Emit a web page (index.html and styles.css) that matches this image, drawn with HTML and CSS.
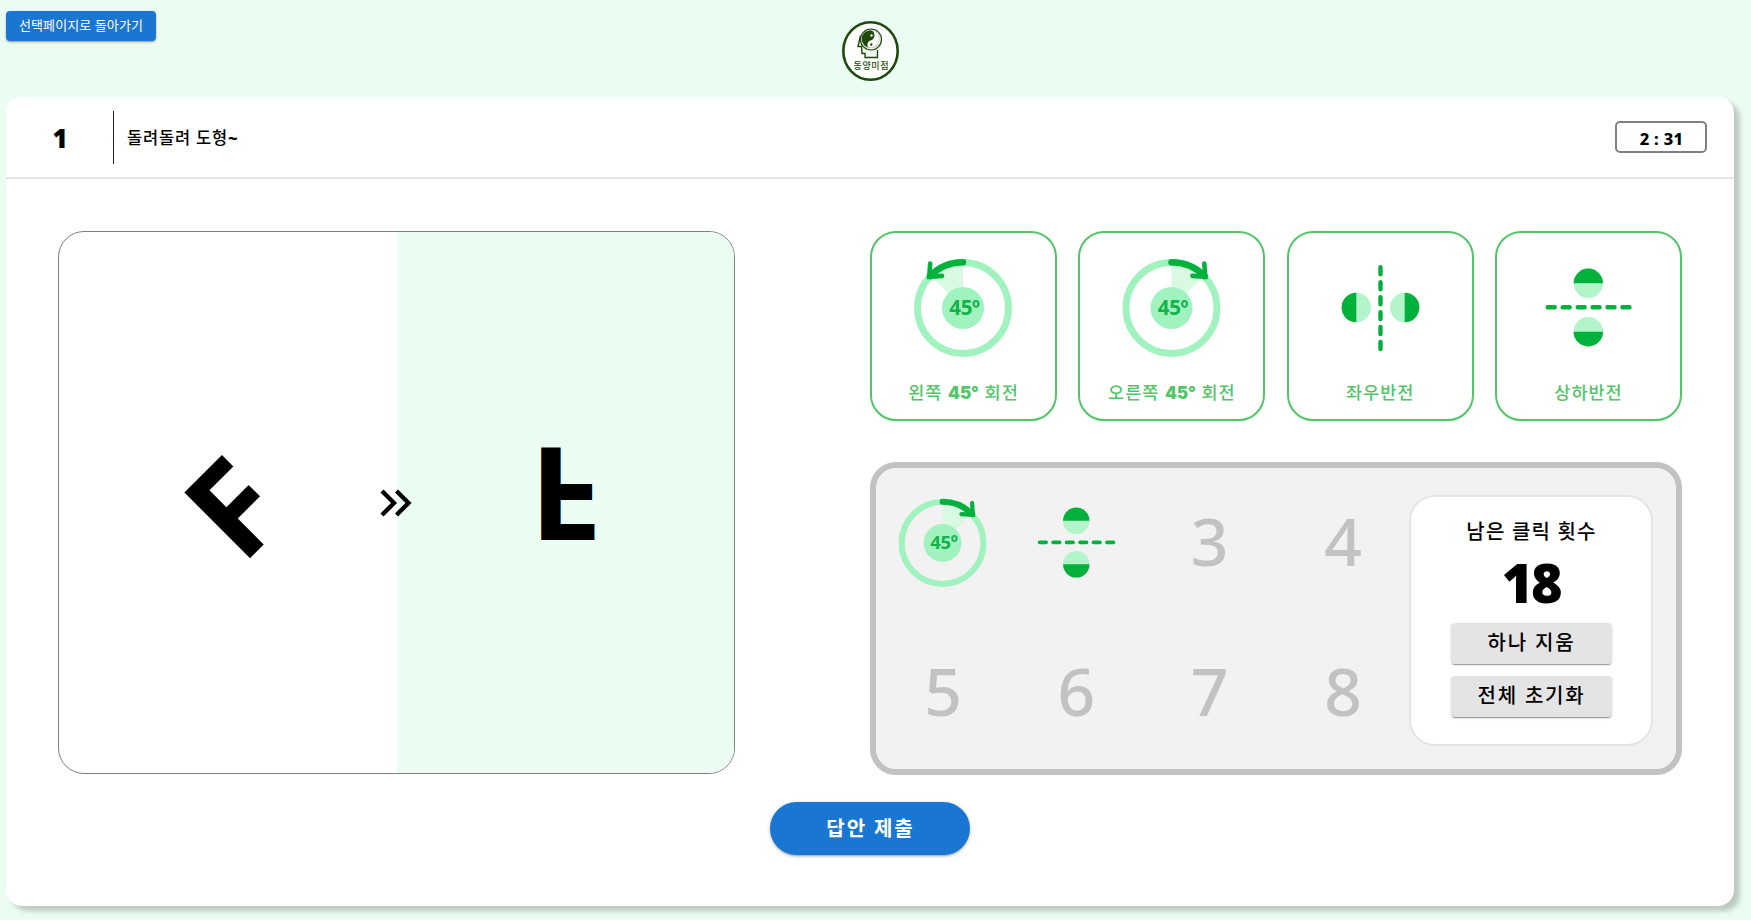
FILE: index.html
```
<!DOCTYPE html>
<html lang="ko">
<head>
<meta charset="utf-8">
<title>돌려돌려 도형~</title>
<link rel="stylesheet" href="styles.css">
</head>
<body>
<svg class="defs" width="0" height="0">
  <symbol id="rotate-right" viewBox="0 0 100 100">
    <path class="wedge" d="M49.500 50V7A43 43 0 0 1 80.500 19Z"/>
    <circle class="ring" cx="49.500" cy="50" r="45.500"/>
    <circle class="hub" cx="49.500" cy="50" r="21"/>
    <path class="arc" d="M49.500 4.200A46 46 0 0 1 82.500 18"/>
    <path class="head" d="M82.300 5.500L83.300 18.700L70.500 17.900"/>
  </symbol>
  <symbol id="rotate-left" viewBox="0 0 100 100">
    <path class="wedge" d="M49 50V7A43 43 0 0 0 18 19Z"/>
    <circle class="ring" cx="49" cy="50" r="45.500"/>
    <circle class="hub" cx="49" cy="50" r="21"/>
    <path class="arc" d="M49 4.200A46 46 0 0 0 16 18"/>
    <path class="head" d="M16.200 5.500L15.200 18.700L28 17.900"/>
  </symbol>
  <symbol id="flip-y" viewBox="0 0 100 100">
    <circle class="soft" cx="50.300" cy="25.300" r="14.700"/>
    <circle class="soft" cx="50.300" cy="73.700" r="14.700"/>
    <path class="solid" d="M35.600 25.300a14.700 14.700 0 0 1 29.400 0z"/>
    <path class="solid" d="M35.600 73.700a14.700 14.700 0 0 0 29.400 0z"/>
    <path class="dash" d="M9.700 49.300h7M24.700 49.300h7M39.700 49.300h7M54.600 49.300h7M69.500 49.300h7M84.500 49.300h7"/>
  </symbol>
  <symbol id="flip-x" viewBox="0 0 100 100">
    <circle class="soft" cx="26.300" cy="49.500" r="14.700"/>
    <circle class="soft" cx="74.700" cy="49.500" r="14.700"/>
    <path class="solid" d="M26.300 34.800a14.700 14.700 0 0 0 0 29.400z"/>
    <path class="solid" d="M74.700 34.800a14.700 14.700 0 0 1 0 29.400z"/>
    <path class="dash" d="M50.500 9.200v7M50.500 24.200v7M50.500 39.200v7M50.500 54.100v7M50.500 69v7M50.500 84v7"/>
  </symbol>
</svg>

<header class="top">
  <button class="back">선택페이지로 돌아가기</button>
  <svg class="logo" viewBox="0 0 57 60">
    <ellipse cx="28.500" cy="30" rx="27.200" ry="28.700" fill="#fff" stroke="#1d4a0c" stroke-width="2.600"/>
    <path d="M18.500 14.500L16 25.500H19.500L20 32.500H23V36.500H35.500V29" fill="#f2f2f0" stroke="#1d4a0c" stroke-width="1.400"/>
    <circle cx="29" cy="18.500" r="10.500" fill="#f2f2f0" stroke="#1d4a0c" stroke-width="1.200"/>
    <circle cx="28.500" cy="18" r="8.800" fill="#1d4a0c"/>
    <path d="M30 9.400C35 10 37.300 14 37.300 18C37 23 33 27 28 26.800C24 26.500 25 20.500 28.500 19.500C33 18.500 34 12 30 9.400Z" fill="#fff"/>
    <circle cx="29.500" cy="14.500" r="1.200" fill="#fff"/>
    <circle cx="29.300" cy="23.500" r="1.200" fill="#1d4a0c"/>
    <text class="logo-name" x="11.500" y="47.500">동양미점</text>
  </svg>
</header>

<main class="sheet">
  <div class="head-row">
    <div class="num">1</div>
    <div class="rule"></div>
    <h1 class="title">돌려돌려 도형<b>~</b></h1>
    <div class="timer">2 : 31</div>
  </div>

  <div class="board">
    <section class="shapes">
      <div class="half"><span class="glyph from">F</span></div>
      <div class="half target"><span class="glyph to">F</span></div>
      <svg class="chev" viewBox="0 0 32 28"><path d="M2 2L14 14L2 26M16.500 2L28.500 14L16.500 26" fill="none" stroke="#000" stroke-width="4.300"/></svg>
    </section>

    <section class="controls">
      <div class="options">
        <button class="option"><svg viewBox="0 0 100 100"><use href="#rotate-left"/><text class="deg" x="50.500" y="56.500">45º</text></svg><span>왼쪽 <b>45°</b> 회전</span></button>
        <button class="option"><svg viewBox="0 0 100 100"><use href="#rotate-right"/><text class="deg" x="51" y="56.500">45º</text></svg><span>오른쪽 <b>45°</b> 회전</span></button>
        <button class="option"><svg viewBox="0 0 100 100"><use href="#flip-x"/></svg><span>좌우반전</span></button>
        <button class="option"><svg viewBox="0 0 100 100"><use href="#flip-y"/></svg><span>상하반전</span></button>
      </div>
      <div class="tray">
        <div class="slots">
          <div class="slot"><svg viewBox="0 0 100 100"><use href="#rotate-right"/><text class="deg" x="51" y="57">45º</text></svg></div>
          <div class="slot"><svg viewBox="0 0 100 100"><use href="#flip-y"/></svg></div>
          <div class="slot"><span>3</span></div>
          <div class="slot"><span>4</span></div>
          <div class="slot"><span>5</span></div>
          <div class="slot"><span>6</span></div>
          <div class="slot"><span>7</span></div>
          <div class="slot"><span>8</span></div>
        </div>
        <div class="clicks">
          <div class="clicks-label">남은 클릭 횟수</div>
          <div class="clicks-num">18</div>
          <button class="tool">하나 지움</button>
          <button class="tool">전체 초기화</button>
        </div>
      </div>
    </section>
  </div>

  <button class="submit">답안 제출</button>
</main>
</body>
</html>
```
FILE: styles.css
```
* { box-sizing: border-box; }
body {
  margin: 0;
  height: 920px;
  padding: 11px 17px 0 6px;
  overflow: hidden;
  background: #ebfcf2;
  color: #000;
  font-family: "Noto Sans", "Noto Sans CJK KR", sans-serif;
}
button { font-family: inherit; border: 0; padding: 0; margin: 0; }
.defs { display: block; height: 0; }

.top { display: grid; grid-template-columns: 1fr 57px 1fr; height: 86px; }
.back {
  width: 150px;
  height: 30px;
  padding-bottom: 4px;
  border-radius: 4px;
  background: #1976d2;
  color: #fff;
  font-size: 13px;
  letter-spacing: 0.1px;
  white-space: nowrap;
  box-shadow: 0 2px 2px -1px rgba(0,0,0,.25), 0 1px 3px rgba(0,0,0,.2);
}
.logo { width: 57px; height: 60px; margin-top: 10px; }
.logo-name { font-size: 9px; font-weight: 500; fill: #1d4a0c; letter-spacing: 0.6px; }

.sheet {
  display: flex;
  flex-direction: column;
  height: 809px;
  border-radius: 16px;
  background: #fff;
  box-shadow: 6px 5px 5px rgba(0,0,0,.2);
}
.head-row {
  display: flex;
  align-items: center;
  height: 82px;
  border-bottom: 2px solid #e4e4e4;
  padding-right: 27px;
}
.num { width: 107px; padding: 2px 0 0 1px; text-align: center; font-size: 26px; font-weight: 900; }
.rule { width: 1px; height: 53px; background: #222; }
.title { margin: 0 auto 0 13px; font-size: 16.500px; font-weight: 500; letter-spacing: 0.800px; }
.title b { font-weight: 900; }
.timer {
  width: 92px;
  height: 32px;
  border: 2px solid #808080;
  border-radius: 5px;
  line-height: 32px;
  padding-left: 1px;
  text-align: center;
  font-size: 16.500px;
  font-weight: 800;
  letter-spacing: 0.3px;
}

.board {
  display: flex;
  justify-content: space-between;
  padding: 52px 52px 0 52px;
}
.shapes {
  position: relative;
  display: flex;
  width: 677px;
  height: 543px;
  border: 1px solid #808080;
  border-radius: 26px;
  overflow: hidden;
}
.half { flex: 1; display: flex; align-items: center; justify-content: center; }
.target { background: #ebfcf2; }
.glyph { display: block; font-size: 130px; line-height: 130px; font-weight: 750; }
.from { transform: translate(4px, 3px) rotate(-45deg); }
.to { transform: translateY(-6.500px) scaleY(-1); }
.chev { position: absolute; left: 321px; top: 257px; width: 32px; height: 28px; }

.controls { width: 812px; }
.options { display: flex; justify-content: space-between; }
.option {
  display: flex;
  flex-direction: column;
  align-items: center;
  width: 187px;
  height: 190px;
  padding-top: 25px;
  border: 2px solid #52c569;
  border-radius: 26px;
  background: #fff;
  color: #52c569;
  font-size: 17.500px;
  font-weight: 500;
  letter-spacing: 1px;
}
.option svg { width: 100px; height: 100px; letter-spacing: 0; }
.option span { margin-top: 21px; line-height: 26px; white-space: nowrap; }
.option b { font-family: Inter, sans-serif; font-size: 17px; font-weight: 900; letter-spacing: 0; }

.ring { fill: none; stroke: #a0f2bf; stroke-width: 6.800; }
.wedge { fill: #d9f9e2; }
.hub { fill: #a0f2bf; }
.arc { fill: none; stroke: #02b13c; stroke-width: 6.500; stroke-linecap: round; }
.head { fill: none; stroke: #02b13c; stroke-width: 4.600; stroke-linecap: round; }
.deg { font-size: 20.500px; font-weight: 700; fill: #12b34a; text-anchor: middle; letter-spacing: -0.3px; }
.soft { fill: #b4f4ca; }
.solid { fill: #02b13c; }
.dash { fill: none; stroke: #02b13c; stroke-width: 4.400; stroke-linecap: round; }

.tray {
  display: flex;
  justify-content: space-between;
  height: 313px;
  margin-top: 41px;
  padding-right: 23px;
  border: 6px solid #c2c2c2;
  border-radius: 26px;
  background: #f2f2f2;
}
.slots {
  display: grid;
  grid-template-columns: repeat(4, 133.300px);
  grid-template-rows: 150px 150px;
  width: 533px;
}
.slot {
  display: flex;
  align-items: center;
  justify-content: center;
  font-size: 66px;
  font-weight: 500;
  color: #c2c2c2;
}
.slot span { padding: 0 0 6px 1px; }
.slot svg { width: 90px; height: 90px; }
.clicks {
  display: flex;
  flex-direction: column;
  align-items: center;
  flex: none;
  width: 244px;
  height: 251px;
  margin-top: 27px;
  padding-top: 20px;
  border: 2px solid #e5e5e5;
  border-radius: 26px;
  background: #fff;
}
.clicks-label { height: 29px; padding-left: 1px; line-height: 29px; font-size: 20px; font-weight: 500; letter-spacing: 1.200px; }
.clicks-num { height: 77px; line-height: 72px; font-size: 54px; font-weight: 900; letter-spacing: -2.500px; }
.tool {
  width: 161px;
  height: 41px;
  margin-bottom: 12px;
  padding: 0 0 4px 1px;
  border-radius: 4px;
  background: #e4e4e4;
  font-size: 20px;
  font-weight: 500;
  letter-spacing: 1.800px;
  box-shadow: 0 2px 1px -1px rgba(0,0,0,.35), 0 1px 3px rgba(0,0,0,.14);
}
.submit {
  align-self: center;
  width: 200px;
  height: 53px;
  margin-top: 27px;
  padding: 0 0 3px 1px;
  border-radius: 27px;
  background: #1976d2;
  color: #fff;
  font-size: 20px;
  font-weight: 700;
  letter-spacing: 1.900px;
  box-shadow: 0 2px 2px -1px rgba(0,0,0,.25), 0 1px 4px rgba(0,0,0,.2);
}
```
